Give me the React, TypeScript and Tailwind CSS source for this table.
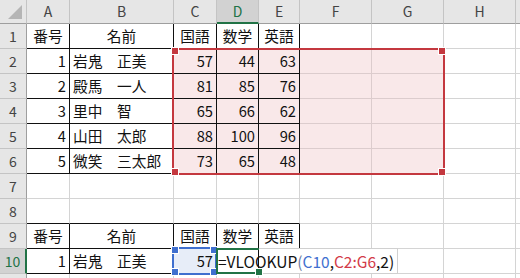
import React from "react";

const FONT = { fontFamily: '"Noto Sans CJK JP", "Noto Sans", sans-serif' };

const COLS = ["A", "B", "C", "D", "E", "F", "G", "H", ""];

type Align = "l" | "c" | "r";
type Cell = { t: string; a: Align } | null;

const head = (): Cell[] => [
  { t: "番号", a: "c" },
  { t: "名前", a: "c" },
  { t: "国語", a: "c" },
  { t: "数学", a: "c" },
  { t: "英語", a: "c" },
];

const students: [string, string, number, number, number][] = [
  ["1", "岩鬼　正美", 57, 44, 63],
  ["2", "殿馬　一人", 81, 85, 76],
  ["3", "里中　智", 65, 66, 62],
  ["4", "山田　太郎", 88, 100, 96],
  ["5", "微笑　三太郎", 73, 65, 48],
];

function rowCells(r: number): Cell[] {
  if (r === 1 || r === 9) return head();
  if (r >= 2 && r <= 6) {
    const s = students[r - 2];
    return [
      { t: s[0], a: "r" },
      { t: s[1], a: "l" },
      { t: String(s[2]), a: "r" },
      { t: String(s[3]), a: "r" },
      { t: String(s[4]), a: "r" },
    ];
  }
  if (r === 10) {
    return [
      { t: "1", a: "r" },
      { t: "岩鬼　正美", a: "l" },
      { t: "57", a: "r" },
      null,
      null,
    ];
  }
  return [];
}

const GRID = "#d4d4d4";
const BLACK = "#111111";
const PINK = "#f9e8e9";
const PINK_GRID = "#dccccd";

function cellStyle(r: number, c: number): React.CSSProperties {
  // c: 0 = column A ... 8 = column I
  const inTable = (r >= 1 && r <= 6) || r === 9 || r === 10;
  const inRange = r >= 2 && r <= 6 && c >= 2 && c <= 6;
  let right = GRID;
  let bottom = GRID;
  let bg = "#ffffff";
  if (inRange) {
    bg = PINK;
    right = PINK_GRID;
    bottom = PINK_GRID;
  }
  if (inTable && c <= 4) {
    right = BLACK;
    bottom = BLACK;
  }
  if (r === 8 && c <= 4) bottom = BLACK;
  if (r === 10 && c === 2) bg = "#e7edf8";
  return {
    borderRightColor: right,
    borderBottomColor: bottom,
    backgroundColor: bg,
  };
}

function Corner() {
  return (
    <div className="flex items-end justify-end pr-[3px] pb-[3px] border-r border-b border-r-[#c4c4c4] border-b-[#9e9e9e] bg-[#e6e6e6]">
      <svg width="15" height="15" viewBox="0 0 15 15">
        <polygon points="14,0 14,14 0,14" fill="#b5b5b5" />
      </svg>
    </div>
  );
}

function ColHeader({ label, active }: { label: string; active: boolean }) {
  return (
    <div
      className={
        active
          ? "flex items-center justify-center border-r border-r-[#c4c4c4] border-b-2 border-b-[#217346] bg-[#d2d2d2] text-[#217346] text-[14px] pt-[1px]"
          : "flex items-center justify-center border-r border-r-[#c4c4c4] border-b border-b-[#9e9e9e] bg-[#e6e6e6] text-[#444444] text-[14px]"
      }
    >
      {label}
    </div>
  );
}

function RowHeader({ n, active }: { n: number; active: boolean }) {
  return (
    <div
      className={
        active
          ? "flex items-center justify-center border-b border-b-[#c4c4c4] border-r-2 border-r-[#217346] bg-[#d2d2d2] text-[#217346] text-[14px]"
          : "flex items-center justify-center border-b border-b-[#c4c4c4] border-r border-r-[#9e9e9e] bg-[#e6e6e6] text-[#444444] text-[14px]"
      }
    >
      {n <= 10 ? n : ""}
    </div>
  );
}

function DataCell({ r, c }: { r: number; c: number }) {
  const cell = c < 5 ? rowCells(r)[c] : null;
  const align =
    cell?.a === "r" ? "justify-end" : cell?.a === "c" ? "justify-center" : "justify-start";
  return (
    <div
      className={`flex items-center ${align} border-r border-b px-[3px] pt-[1px] text-[14.7px] text-[#111111] whitespace-nowrap overflow-hidden`}
      style={cellStyle(r, c)}
    >
      {cell?.t ?? ""}
    </div>
  );
}

/* Square grips on the four corners of a reference frame */
function Grips({ color }: { color: string }) {
  const base = "absolute w-[6px] h-[6px] box-content border border-white";
  return (
    <>
      <div className={`${base} -left-[3px] -top-[3px]`} style={{ backgroundColor: color }} />
      <div className={`${base} -right-[3px] -top-[3px]`} style={{ backgroundColor: color }} />
      <div className={`${base} -left-[3px] -bottom-[3px]`} style={{ backgroundColor: color }} />
      <div className={`${base} -right-[3px] -bottom-[3px]`} style={{ backgroundColor: color }} />
    </>
  );
}

export default function App() {
  const rows = Array.from({ length: 11 }, (_, i) => i + 1);
  return (
    <div className="relative w-[520px] h-[278px] overflow-hidden bg-white" style={FONT}>
      <div className="grid grid-cols-[27px_43px_104px_43px_42px_41px_72px_72px_72px_1fr] grid-rows-[24px_repeat(11,25px)]">
        <Corner />
        {COLS.map((l, i) => (
          <ColHeader key={i} label={l} active={l === "D"} />
        ))}
        {rows.map((r) => (
          <React.Fragment key={r}>
            <RowHeader n={r} active={r === 10} />
            {COLS.map((_, c) => (
              <DataCell key={c} r={r} c={c} />
            ))}
          </React.Fragment>
        ))}
      </div>

      {/* reference frame C2:G6 */}
      <div className="absolute left-[172px] top-[48px] w-[273px] h-[127px] border-2 border-[#c4383f]">
        <Grips color="#c4383f" />
      </div>

      {/* reference frame C10 */}
      <div className="absolute left-[172px] top-[247px] w-[45px] h-[28px] border-2 border-[#3f6fcf]">
        <Grips color="#3f6fcf" />
      </div>

      {/* active cell D10 with its in-cell editor spilling over E10:F10 */}
      <div className="absolute left-[216px] top-[248px] h-[26px] flex">
        <div className="relative w-[43px] border-l-2 border-t-2 border-b-2 border-[#217346]">
          <div className="absolute -right-[4px] -bottom-[4px] w-[6px] h-[6px] bg-[#217346] border border-white box-content" />
        </div>
        <div className="w-[139px] bg-white border-t border-r border-b border-[#d0d0d0]" />
        <div className="absolute left-[2px] top-0 h-full flex items-center pt-[1px] text-[15.5px] text-[#111111] whitespace-nowrap">
          <span>=VLOOKUP</span>
          <span className="text-[#6b7ba3]">(</span>
          <span className="text-[#3f6fcf]">C10</span>
          <span>,</span>
          <span className="text-[#d23a48]">C2:G6</span>
          <span>,2)</span>
        </div>
      </div>
    </div>
  );
}
